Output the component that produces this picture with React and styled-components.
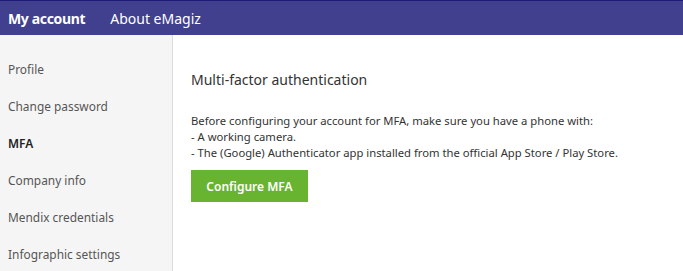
import React from "react";
import styled, { createGlobalStyle } from "styled-components";

const Global = createGlobalStyle`
  html, body { margin: 0; padding: 0; background: #fff; }
  body { font-family: "Noto Sans", "Open Sans", sans-serif; color: #333; }
`;

const Page = styled.div`
  display: flex;
  flex-direction: column;
  width: 683px;
  height: 271px;
  overflow: hidden;
`;

const TopBar = styled.header`
  display: flex;
  align-items: center;
  height: 34px;
  background: #40408f;
  border-top: 1px solid #1c1c78;
  padding: 0 8px;
  gap: 25px;
  flex-shrink: 0;
`;

const TopLink = styled.a`
  color: #fff;
  font-size: 14px;
  font-weight: ${(p) => (p.$active ? 700 : 400)};
  text-decoration: none;
  letter-spacing: ${(p) => (p.$active ? "-0.35px" : "0")};
`;

const Body = styled.div`
  display: flex;
  flex: 1;
`;

const Sidebar = styled.nav`
  width: 172px;
  background: #f5f5f5;
  border-right: 1px solid #dcdcdc;
  display: flex;
  flex-direction: column;
  padding-top: 26px;
  flex-shrink: 0;
`;

const NavItem = styled.div`
  height: 37px;
  padding-left: 8px;
  font-size: 11.9px;
  line-height: 16px;
  color: ${(p) => (p.$active ? "#222" : "#555")};
  font-weight: ${(p) => (p.$active ? 600 : 400)};
`;

const Main = styled.main`
  flex: 1;
  padding: 35px 18px 0 18px;
`;

const Heading = styled.h2`
  margin: 0 0 23px;
  font-size: 14px;
  font-weight: 400;
  color: #333;
  line-height: 20px;
`;

const Text = styled.p`
  margin: 0 0 9px;
  font-size: 11.25px;
  line-height: 16px;
  color: #333;
`;

const Button = styled.button`
  display: block;
  width: 117px;
  height: 32px;
  border: none;
  background: #68b32f;
  color: #fff;
  font-family: inherit;
  font-size: 12px;
  font-weight: 600;
  cursor: pointer;
`;

export default function App() {
  const items = ["Profile", "Change password", "MFA", "Company info", "Mendix credentials", "Infographic settings"];
  return (
    <Page>
      <Global />
      <TopBar>
        <TopLink $active>My account</TopLink>
        <TopLink>About eMagiz</TopLink>
      </TopBar>
      <Body>
        <Sidebar>
          {items.map((it) => (
            <NavItem key={it} $active={it === "MFA"}>{it}</NavItem>
          ))}
        </Sidebar>
        <Main>
          <Heading>Multi-factor authentication</Heading>
          <Text>
            Before configuring your account for MFA, make sure you have a phone with:
            <br />- A working camera.
            <br />- The (Google) Authenticator app installed from the official App Store / Play Store.
          </Text>
          <Button>Configure MFA</Button>
        </Main>
      </Body>
    </Page>
  );
}
